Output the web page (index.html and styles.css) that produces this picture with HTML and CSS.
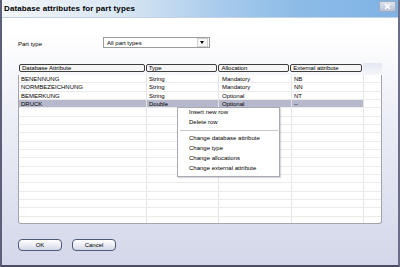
FILE: index.html
```html
<!DOCTYPE html>
<html lang="en">
<head>
  <meta charset="UTF-8">
  <title>Database attributes for part types</title>
  <link rel="stylesheet" href="styles.css">
</head>
<body>
  <div class="window">
    <div class="titlebar">
      <span class="title">Database attributes for part types</span>
      <span class="close">
        <svg width="15" height="9" viewBox="0 0 15 9"><path d="M5 2 L10 7 M10 2 L5 7" stroke="#fff" stroke-width="1.6"/></svg>
      </span>
    </div>

    <div class="content">
      <div class="part-row">
        <label class="part-label">Part type</label>
        <div class="combo">
          <span class="combo-text">All part types</span>
          <span class="combo-arrow"></span>
        </div>
      </div>

      <div class="grid">
        <div class="grid-head">
          <div class="hcell w1">Database Attribute</div>
          <div class="hcell w2">Type</div>
          <div class="hcell w3">Allocation</div>
          <div class="hcell w4">External attribute</div>
          <div class="hfill"></div>
        </div>
        <div class="grid-body" id="rows"></div>
      </div>

      <div class="buttons">
        <button class="btn">OK</button>
        <button class="btn">Cancel</button>
      </div>
    </div>

    <!-- Context menu over the selected row -->
    <div class="menu">
      <div class="menu-item">Insert new row</div>
      <div class="menu-item">Delete row</div>
      <div class="menu-sep"></div>
      <div class="menu-item">Change database attribute</div>
      <div class="menu-item">Change type</div>
      <div class="menu-item">Change allocations</div>
      <div class="menu-item">Change external attribute</div>
    </div>
  </div>

  <script>
    const data = [
      ['BENENNUNG', 'String', 'Mandatory', 'NB'],
      ['NORMBEZEICHNUNG', 'String', 'Mandatory', 'NN'],
      ['BEMERKUNG', 'String', 'Optional', 'NT'],
      ['DRUCK', 'Double', 'Optional', '--']
    ];

    const rows = document.getElementById('rows');
    for (let i = 0; i < 18; i++) {
      const row = document.createElement('div');
      row.className = 'row' + (i === 3 ? ' selected' : '');
      const vals = data[i] || ['', '', '', ''];
      row.innerHTML = `
        <div class="cell">${vals[0]}</div>
        <div class="cell">${vals[1]}</div>
        <div class="cell">${vals[2]}</div>
        <div class="cell">${vals[3]}</div>
        <div class="cell last"></div>
      `;
      rows.appendChild(row);
    }
  </script>
</body>
</html>
```

FILE: styles.css
```css
html, body {
  margin: 0;
  padding: 0;
}

body {
  width: 400px;
  height: 267px;
  overflow: hidden;
  font-family: 'Liberation Sans', Arial, sans-serif;
  color: #000;
}

.window {
  position: relative;
  box-sizing: border-box;
  width: 400px;
  height: 267px;
  display: flex;
  flex-direction: column;
  border-left: 2px solid #5d5e7a;
  border-right: 2px solid #6a6c88;
  border-bottom: 2px solid #4c4d64;
  background: linear-gradient(#ffffff 0%, #ffffff 12%, #eceef6 45%, #d3d7e9 100%);
}

.titlebar {
  height: 17px;
  display: flex;
  align-items: center;
  justify-content: space-between;
  padding: 0 2px 0 2px;
  background: linear-gradient(to right, #f3f6fb 0%, #d9e6f4 30%, #a8cbec 55%, #8cbbe7 75%, #7fb3e4 100%);
  border-bottom: 1px solid #c4d2e4;
}

.title {
  font-size: 8px;
  font-weight: bold;
  letter-spacing: 0.1px;
}

.close {
  width: 15px;
  height: 9px;
  margin-top: -4px;
  border-radius: 2px;
  border: 1px solid #9eaac0;
  background: linear-gradient(#dfe5ef, #b7c2d6);
  display: flex;
}

.content {
  flex: 1;
  display: flex;
  flex-direction: column;
  padding: 19px 0 0 16px;
}

.part-row {
  display: flex;
  align-items: center;
  height: 11px;
}

.part-label {
  font-size: 6px;
  width: 85px;
  margin-top: 2px;
}

.combo {
  box-sizing: border-box;
  width: 107px;
  height: 11px;
  display: flex;
  align-items: center;
  justify-content: space-between;
  border: 1px solid #9c9c9c;
  background: #fff;
}

.combo-text {
  font-size: 6px;
  padding-left: 3px;
}

.combo-arrow {
  position: relative;
  width: 9px;
  height: 7px;
  margin-right: 1px;
  border: 1px solid #d0d0d0;
  background: #f7f7f7;
}

.combo-arrow::after {
  content: '';
  position: absolute;
  left: 2px;
  top: 2px;
  border-left: 2.5px solid transparent;
  border-right: 2.5px solid transparent;
  border-top: 3px solid #000;
}

.grid {
  width: 364px;
  margin-top: 16px;
}

.grid-head {
  display: flex;
  height: 11px;
  gap: 1px;
  padding-left: 1px;
}

.hcell {
  box-sizing: border-box;
  height: 8px;
  font-size: 6px;
  line-height: 7px;
  padding-left: 2px;
  border: 1px solid #3c3c3c;
  border-left-width: 1.5px;
  border-radius: 2px;
  background: #f6f6f6;
}

.w1 { width: 126px; }
.w2 { width: 72px; }
.w3 { width: 71px; }
.w4 { width: 72px; }

.hfill {
  width: 19px;
  height: 11px;
  margin-top: -1px;
  background: linear-gradient(#e4e8f2, #f4f5f9);
}

.grid-body {
  box-sizing: border-box;
  height: 149px;
  overflow: hidden;
  background: #fff;
  border: 1px solid #a4a4ac;
  border-top: none;
  border-radius: 0 0 3px 3px;
}

.row {
  display: grid;
  grid-template-columns: 128px 72px 73px 72px 17px;
  height: 8.333px;
  box-sizing: border-box;
  border-bottom: 1px solid #ebebeb;
}

.row.selected .cell {
  background: #b5b9cb;
}

.row.selected .cell.last {
  background: #fff;
}

.cell {
  font-size: 6px;
  line-height: 8px;
  padding-left: 2px;
  border-right: 1px solid #e4e4e4;
  overflow: hidden;
  white-space: nowrap;
}

.cell:first-child {
  padding-left: 2px;
}

.cell:nth-child(3) {
  padding-left: 3px;
}

.cell.last {
  border-right: none;
}

.buttons {
  display: flex;
  gap: 10px;
  margin-top: 15px;
}

.btn {
  box-sizing: border-box;
  width: 44px;
  height: 12px;
  padding: 0;
  font-family: 'Liberation Sans', Arial, sans-serif;
  font-size: 6px;
  color: #000;
  border: 1px solid #4e5a78;
  border-radius: 4px;
  background: linear-gradient(#ffffff, #e6e9f1 60%, #cfd5e3);
}

.menu {
  position: absolute;
  left: 175px;
  top: 107px;
  width: 103px;
  box-sizing: border-box;
  padding-bottom: 2px;
  background: #fff;
  border: 1px solid #a9a9b4;
  box-shadow: 1px 1px 1px rgba(0, 0, 0, 0.15);
}

.menu-item {
  height: 10px;
  line-height: 9px;
  font-size: 6px;
  padding-left: 11px;
  white-space: nowrap;
}

.menu-sep {
  height: 1px;
  margin: 2px 1px 3px 2px;
  background: #c6c6c6;
}
```
